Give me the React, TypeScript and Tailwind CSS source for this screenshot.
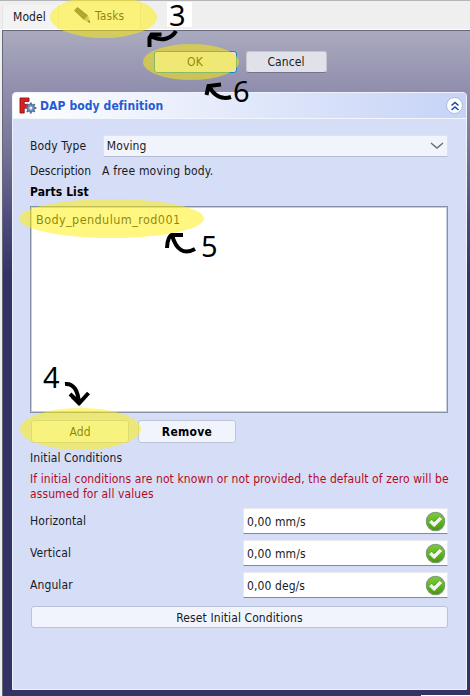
import type { ReactNode } from "react";

function CheckIcon() {
  return (
    <svg width="21" height="21" viewBox="0 0 21 21" className="shrink-0">
      <defs>
        <linearGradient id="green" x1="0" y1="0" x2="0" y2="1">
          <stop offset="0" stopColor="#83c943" />
          <stop offset="0.5" stopColor="#5fbb18" />
          <stop offset="1" stopColor="#48930d" />
        </linearGradient>
      </defs>
      <circle cx="10.5" cy="10.5" r="9.2" fill="url(#green)" stroke="#7b9b75" strokeWidth="1.1" />
      <path d="M3.6 11.2 6.6 8.4l2.5 2.5 5.6-5.5 2.9 2.7-8.4 8.4z" fill="#f2f4ee" stroke="#4a9018" strokeWidth="0.6" />
    </svg>
  );
}

function Highlight({ className }: { className: string }) {
  return <div className={`absolute rounded-[50%] bg-[#fff000]/50 ${className}`} />;
}

function Digit({ className, children }: { className: string; children: ReactNode }) {
  return (
    <span className={`absolute font-['Noto_Sans',sans-serif] text-[29px] leading-[28px] tracking-normal text-black ${className}`}>
      {children}
    </span>
  );
}

function Field({ label, value }: { label: string; value: string }) {
  return (
    <div className="flex h-[26px] items-center justify-between">
      <span className="pt-px">{label}</span>
      <div className="flex h-[26px] w-[205px] items-center justify-between border border-b-[#868993] border-[#e7e9ed] bg-white pr-px pl-[3px]">
        <span className="pt-[3px]">{value}</span>
        <CheckIcon />
      </div>
    </div>
  );
}

export default function App() {
  return (
    <div className="relative flex h-[696px] w-[470px] flex-col overflow-hidden bg-[#efefef] font-['DejaVu_Sans_Condensed','DejaVu_Sans',sans-serif] text-[12px] leading-[15px] tracking-[0.1px] text-[#171a23]">
      <div className="flex h-[30px] shrink-0 border-t border-b border-t-[#b5b5b5] border-b-white pl-[2px]">
        <div className="mt-[4px] w-[57px] border-r border-l border-[#e5e5e5] bg-[#f3f3f3] pt-[5px] pl-[10px]">Model</div>
        <div className="mt-[2px] flex w-[82px] border-r border-[#dedede] bg-[#f5f5f5] pt-[6px] pl-[14px]">
          <svg width="18" height="18" viewBox="0 0 18 18" className="-mt-[3px]">
            <path d="M1 4.5 4.5 1 15 9.5 11 14z" fill="#565b52" />
            <path d="m11 14 4-4.5 2.2 7.5z" fill="#a9a99a" />
            <path d="m14.5 15.8 2-1.8.7 3z" fill="#30342e" />
            <path d="m3 3 10 9" stroke="#73786a" />
          </svg>
          <span className="ml-[4px]">Tasks</span>
        </div>
      </div>
      <div className="ml-[2px] flex h-[666px] flex-col border-t border-l border-[#66677b] bg-[linear-gradient(to_bottom,#aaaabf_0px,#8f8dac_62px,#777699_115px,#4c4b7c_190px,#333366_245px)] pl-[9px]">
        <div className="mt-[20px] flex h-[22px] justify-center gap-[9px] pr-[13px] pl-[11px]">
          <div className="h-[22px] w-[83px] rounded-[3px] border border-[#1582cc] bg-[#e1e1ea] pt-[3px] text-center">OK</div>
          <div className="h-[22px] w-[81px] rounded-[3px] border border-[#c6c6d0] border-b-[#74748d] bg-[#e1e2e9] pt-[3px] text-center">Cancel</div>
        </div>
        <div className="mt-[19px] flex h-[598px] w-[455px] flex-col overflow-hidden rounded-t-[4px] border border-[#eff2fb] bg-[#d6def7]">
          <div className="flex h-[26px] shrink-0 items-center border-b border-[#f3f5fd] bg-[linear-gradient(to_right,#ffffff,#c6d3f7)] pr-[3px] pl-[6px]">
            <svg width="18" height="19" viewBox="0 0 18 19">
              <path d="M1 2h9v3.4H5.2v3H9V12H5.2v5H1z" fill="#dc2020" stroke="#8d1015" strokeWidth="0.9" />
              <g stroke="#4a6a95" strokeWidth="2">
                <path d="M11.8 6.5v11M6.3 12h11M7.9 8.1l7.8 7.8M15.7 8.1l-7.8 7.8" />
              </g>
              <circle cx="11.8" cy="12" r="3.8" fill="#7191bd" stroke="#4a6a95" strokeWidth="0.8" />
              <circle cx="11.8" cy="12" r="1.5" fill="#eef4fb" />
            </svg>
            <span className="mt-[2px] ml-[3px] font-bold text-[#245bd3]">DAP body definition</span>
            <div className="ml-auto flex size-[17px] items-center justify-center rounded-full border border-[#aeb8d3] bg-white">
              <svg width="10" height="12" viewBox="0 0 10 12" fill="none" stroke="#1d4bab" strokeWidth="1.6">
                <path d="m1.5 5.5 3.5-3 3.5 3M1.5 10 5 7l3.5 3" />
              </svg>
            </div>
          </div>
          <div className="flex flex-col pt-[16px] pr-[18px] pl-[17px]">
            <div className="flex h-[22px] items-center">
              <span className="w-[73px] pt-px">Body Type</span>
              <div className="flex h-[22px] w-[346px] items-center justify-between border border-[#dce2f1] border-b-[#b4bdd6] bg-[#f1f4fd] pr-[3px] pl-[3px]">
                <span className="pt-px">Moving</span>
                <svg width="14" height="8" viewBox="0 0 14 8" fill="none" stroke="#686b73" strokeWidth="1.4"><path d="m1 1 6 5 6-5" /></svg>
              </div>
            </div>
            <div className="mt-[6px] flex h-[17px] items-center">
              <span className="w-[72px] tracking-[-0.05px]">Description</span>
              <span className="tracking-[0.2px]">A free moving body.</span>
            </div>
            <div className="mt-[5px] h-[16px] font-bold text-black">Parts List</div>
            <div className="mt-[5px] h-[207px] w-[418px] border border-[#8791a5] bg-white pt-[5px] pl-[5px] text-[12.5px] tracking-[0.42px] shadow-[inset_0_0_0_1px_#c6cfe2]">Body_pendulum_rod001</div>
            <div className="mt-[7px] flex h-[23px] gap-[9px] pl-[1px]">
              <div className="w-[98px] rounded-[3px] border border-[#bdc5d9] bg-[#f1f4fd] pt-[4px] text-center">Add</div>
              <div className="w-[98px] rounded-[3px] border border-[#bdc5d9] bg-[#f1f4fd] pt-[4px] text-center font-bold tracking-[0.3px] text-black">Remove</div>
            </div>
            <div className="mt-[8px] h-[15px]">Initial Conditions</div>
            <div className="mt-[6px] h-[30px] whitespace-nowrap text-[#b40b25]">
              <div>If initial conditions are not known or not provided, the default of zero will be</div>
              <div>assumed for all values</div>
            </div>
            <div className="mt-[6px] flex flex-col gap-[6px]">
              <Field label="Horizontal" value="0,00 mm/s" />
              <Field label="Vertical" value="0,00 mm/s" />
              <Field label="Angular" value="0,00 deg/s" />
            </div>
            <div className="mt-[8px] ml-[1px] h-[22px] w-[417px] rounded-[3px] border border-[#b9c2d9] bg-[#f1f4fd] pt-[4px] text-center">Reset Initial Conditions</div>
          </div>
        </div>
      </div>
      <div className="absolute top-[2px] left-[167px] h-[25px] w-[25px] bg-white" />
      <Highlight className="top-[-4px] left-[50px] h-[42px] w-[107px]" />
      <Highlight className="top-[44px] left-[143px] h-[36px] w-[96px]" />
      <Highlight className="top-[199px] left-[19px] h-[39px] w-[185px]" />
      <Highlight className="top-[408px] left-[20px] h-[42px] w-[121px]" />
      <Digit className="top-[1px] left-[169px]">3</Digit>
      <Digit className="top-[77px] left-[233px]">6</Digit>
      <Digit className="top-[232px] left-[201px]">5</Digit>
      <Digit className="top-[363px] left-[43px]">4</Digit>
      <svg className="absolute inset-0" width="470" height="696" fill="none" stroke="#000" strokeWidth="4">
        <path d="M176 31c-4 7-13 11-24 6M149.5 47V38l2-3.5h10" />
        <path d="M231 97c-9 3-17-1-22-11M206.5 95l2-9 12.500-1.500" />
        <path d="M195 249c-11 6-19 1-23-14M167 248c0-8 3-13 5-13h11" />
        <path d="M65 384c9-1 13 7 14 19M70 394l9.500 9 9-10" />
        <path d="M71 398 80 397l-1 9z" fill="#000" stroke="none" />
      </svg>
      <div className="absolute right-0 bottom-0 h-px w-[49px] bg-white" />
    </div>
  );
}
